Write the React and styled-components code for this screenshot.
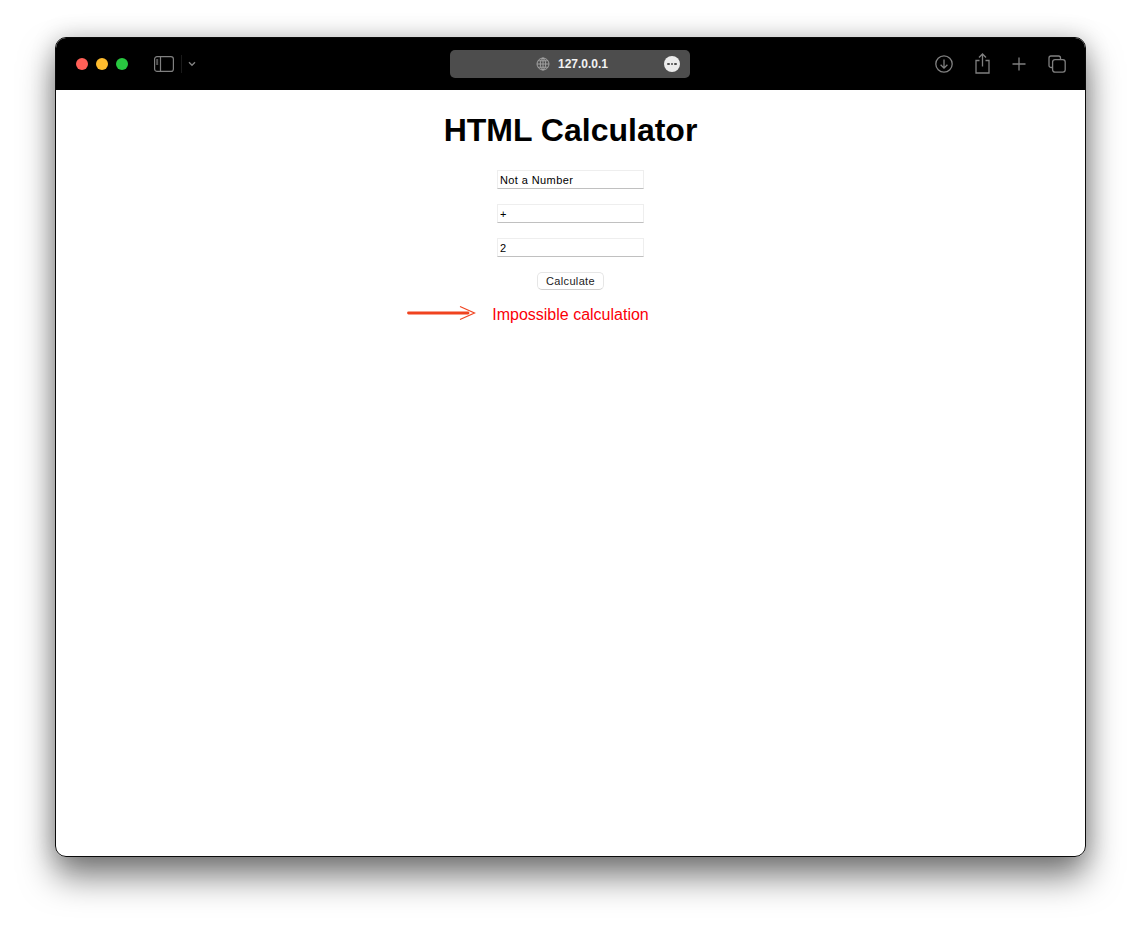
import React from "react";
import styled, { createGlobalStyle } from "styled-components";

const Global = createGlobalStyle`
  html, body { margin: 0; padding: 0; background: #fff; }
  body { font-family: "Liberation Sans", Arial, sans-serif; }
`;

const Stage = styled.div`
  box-sizing: border-box;
  width: 1141px;
  height: 930px;
  padding: 37px 55px 73px 55px;
  overflow: hidden;
`;

const Win = styled.div`
  box-sizing: border-box;
  width: 1031px;
  height: 820px;
  border: 1px solid #0a0a0a;
  border-radius: 11px;
  overflow: hidden;
  background: #fff;
  display: flex;
  flex-direction: column;
`;

const Shadow = styled.div`
  border-radius: 11px;
  width: 1031px;
  height: 820px;
  box-shadow: 0 20px 34px rgba(0, 0, 0, 0.5), 0 0 24px rgba(0, 0, 0, 0.2);
`;

const Toolbar = styled.div`
  flex: 0 0 52px;
  background: #000;
  display: flex;
  align-items: center;
  padding: 0 19px 0 20px;
  position: relative;
`;

const Lights = styled.div`
  display: flex;
  gap: 8px;
`;

const Light = styled.span`
  width: 12px;
  height: 12px;
  border-radius: 50%;
  background: ${(p) => p.$c};
`;

const SidebarGroup = styled.div`
  display: flex;
  align-items: center;
  margin-left: 26px;
  gap: 7px;
  flex: 0 0 auto;
`;

const Divider = styled.span`
  width: 1px;
  height: 18px;
  background: #1a1a1a;
`;

const ChevronIcon = styled.svg`
  margin-left: -1px;
`;

const Address = styled.div`
  position: relative;
  box-sizing: border-box;
  margin-left: 254px;
  width: 240px;
  height: 28px;
  border-radius: 5px;
  background: #4d4d4d;
  display: flex;
  align-items: center;
  justify-content: center;
  gap: 8px;
  padding-left: 4px;
  color: #f2f2f2;
  font-size: 12px;
  font-weight: 700;
`;

const MoreBadge = styled.span`
  position: absolute;
  right: 10px;
  top: 6px;
  width: 16px;
  height: 16px;
  border-radius: 50%;
  background: #ececec;
  display: flex;
  align-items: center;
  justify-content: center;
  gap: 1px;
`;

const MoreDot = styled.i`
  width: 2.4px;
  height: 2.4px;
  border-radius: 50%;
  background: #4d4d4d;
`;

const Actions = styled.div`
  margin-left: auto;
  display: flex;
  align-items: center;
  gap: 22px;
`;

const ShareIcon = styled.svg`
  margin-top: -2px;
`;

const Body = styled.main`
  flex: 1;
  position: relative;
  display: flex;
  flex-direction: column;
  align-items: center;
`;

const Title = styled.h1`
  margin: 22px 0 21px;
  font-size: 32px;
  line-height: 37px;
  font-weight: 700;
  color: #000;
`;

const Field = styled.input`
  box-sizing: border-box;
  display: block;
  width: 147px;
  height: 19px;
  margin: 0 0 15px;
  padding: 1px 2px 0;
  border: 1px solid #eeeeee;
  border-bottom-color: #c0c0c0;
  background: #fff;
  color: #000;
  font-family: "Liberation Sans", Arial, sans-serif;
  font-size: 11px;
  letter-spacing: 0.4px;
  outline: none;
`;

const Submit = styled.button`
  box-sizing: border-box;
  width: 67px;
  height: 18px;
  padding: 0;
  margin: 0 0 16px;
  border: 1px solid #e6e6e6;
  border-bottom-color: #cfcfcf;
  border-radius: 5px;
  background: #fff;
  color: #222;
  font-family: "Liberation Sans", Arial, sans-serif;
  font-size: 11px;
  letter-spacing: 0.35px;
`;

const Result = styled.p`
  margin: 0;
  color: #fb0007;
  font-size: 16px;
  line-height: 18px;
`;

const Arrow = styled.svg`
  position: absolute;
  left: 350px;
  top: 215px;
`;

const stroke = "#808080";

export default function App() {
  return (
    <>
      <Global />
      <Stage>
        <Shadow>
          <Win>
            <Toolbar>
              <Lights>
                <Light $c="#ff5f57" />
                <Light $c="#febc2e" />
                <Light $c="#28c840" />
              </Lights>
              <SidebarGroup>
                <svg width="20" height="16" viewBox="0 0 20 16" fill="none" stroke={stroke} strokeWidth="1.2">
                  <rect x="0.6" y="0.6" width="18.8" height="14.8" rx="2.5" />
                  <path d="M6.5 0.6V15.4" />
                  <path d="M2.2 4h2M2.2 6h2M2.2 8h2" strokeWidth="1" stroke="#aaa" />
                </svg>
                <Divider />
                <ChevronIcon width="8" height="6" viewBox="0 0 8 6" fill="none" stroke={stroke} strokeWidth="1.4">
                  <path d="M1 1.2L4 4.2L7 1.2" />
                </ChevronIcon>
              </SidebarGroup>
              <Address>
                <svg width="14" height="14" viewBox="0 0 14 14" fill="none" stroke="#a8a8a8" strokeWidth="0.9">
                  <circle cx="7" cy="7" r="6" />
                  <ellipse cx="7" cy="7" rx="2.7" ry="6" />
                  <path d="M7 1V13M1 7H13M2 3.8H12M2 10.2H12" />
                </svg>
                <span>127.0.0.1</span>
                <MoreBadge>
                  <MoreDot />
                  <MoreDot />
                  <MoreDot />
                </MoreBadge>
              </Address>
              <Actions>
                <svg width="18" height="18" viewBox="0 0 18 18" fill="none" stroke={stroke} strokeWidth="1.3">
                  <circle cx="9" cy="9" r="8.2" />
                  <path d="M9 4.5V13M5.6 9.8L9 13.2L12.4 9.8" />
                </svg>
                <ShareIcon width="15" height="21" viewBox="0 0 15 21" fill="none" stroke={stroke} strokeWidth="1.3">
                  <path d="M4.5 7.5H1V20H14V7.5H10.5" />
                  <path d="M7.5 13.5V1.2M4 4.5L7.5 1L11 4.5" />
                </ShareIcon>
                <svg width="14" height="14" viewBox="0 0 14 14" fill="none" stroke={stroke} strokeWidth="1.3">
                  <path d="M7 0.5V13.5M0.5 7H13.5" />
                </svg>
                <svg width="18" height="18" viewBox="0 0 18 18" fill="none" stroke={stroke} strokeWidth="1.3">
                  <path d="M4 12.5H3A2 2 0 0 1 1 10.5V3A2 2 0 0 1 3 1H10.5A2 2 0 0 1 12.5 3V4" />
                  <rect x="4.6" y="4.6" width="12.6" height="12.6" rx="2.4" />
                </svg>
              </Actions>
            </Toolbar>
            <Body>
              <Title>HTML Calculator</Title>
              <Field defaultValue="Not a Number" />
              <Field defaultValue="+" />
              <Field defaultValue="2" />
              <Submit>Calculate</Submit>
              <Result>Impossible calculation</Result>
              <Arrow width="72" height="16" viewBox="0 0 72 16" fill="none" stroke="#f0431f">
                <path d="M2.5 8H62" strokeWidth="2.8" strokeLinecap="round" />
                <path d="M54 1.5L68.5 8L54 14.5" strokeWidth="1.2" />
              </Arrow>
            </Body>
          </Win>
        </Shadow>
      </Stage>
    </>
  );
}
